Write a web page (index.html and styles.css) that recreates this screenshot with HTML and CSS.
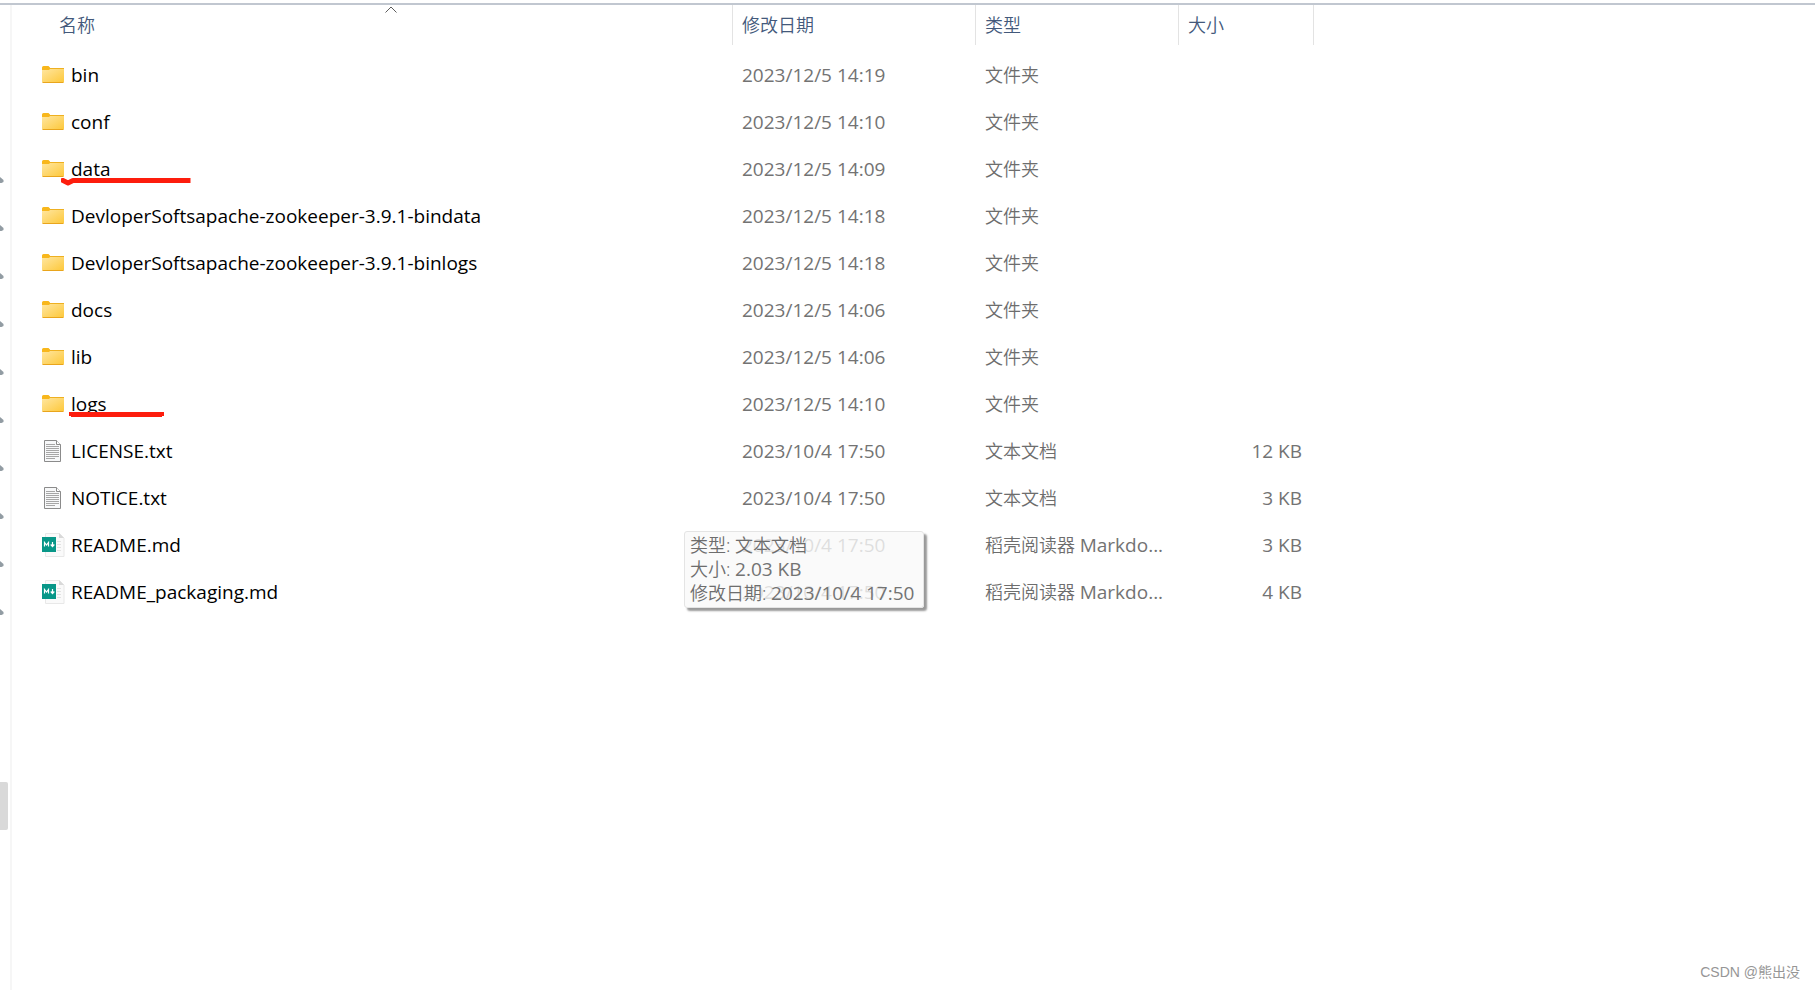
FILE: index.html
```
<!DOCTYPE html>
<html lang="zh-CN">
<head>
<meta charset="utf-8">
<title>apache-zookeeper-3.9.1-bin</title>
<link rel="stylesheet" href="styles.css">
</head>
<body>
<svg class="defs" aria-hidden="true">
  <defs>
    <linearGradient id="gold" x1="0" y1="0" x2="1" y2="1">
      <stop offset="0" stop-color="#ffe6a0"/><stop offset="1" stop-color="#fdc83a"/>
    </linearGradient>
    <symbol id="folder" viewBox="0 0 24 24">
      <path d="M1 4.500q0-1.500 1.500-1.500h5l1.500 1.500v1.500h14v3H1z" fill="#f8b71c"/>
      <path d="M1 7h7l1-1h14v12.500q0 1-1 1H2q-1 0-1-1z" fill="url(#gold)"/>
      <path d="M8.500 5.500H23" stroke="#eeb021"/>
      <path d="M1.500 19.500h21" stroke="#e9a51c"/>
    </symbol>
    <symbol id="text" viewBox="0 0 24 24">
      <path d="M3.500 1.500h12l4 4v17h-16z" fill="#f7f8f9" stroke="#8b8b8b"/>
      <path d="M15.500 1.500v4h4" fill="#fff" stroke="#8b8b8b"/>
      <path d="M5 5.500h9M5 7.500h13M5 9.500h13M5 11.500h13M5 13.500h13M5 15.500h13M5 17.500h13M5 19.500h9" stroke="#a6a6a6"/>
    </symbol>
    <symbol id="md" viewBox="0 0 24 24">
      <path d="M4.500.5h14l4.500 4.500v18.500h-18.500z" fill="#fafafa" stroke="#e8e8e8"/>
      <path d="M18 0v5h5z" fill="#d9d9d9"/>
      <path d="M16 8.500h4M16 11.500h4M16 14.500h4M16 17.500h4" stroke="#e2e2e2"/>
      <path d="M1 4h14v15H1z" fill="#089788"/>
      <path d="M3.500 13.500V9.500l2 2.500 2-2.500v4M11.500 9v4M9.700 11.500l1.800 2 1.800-2" fill="none" stroke="#fff" stroke-width="1.200"/>
    </symbol>
    <symbol id="pin" viewBox="0 0 4 8">
      <path d="M0 1l3.500 3v2L1.500 7H0z" fill="#929ca3"/>
    </symbol>
  </defs>
</svg>
<div class="window">
  <aside class="nav">
    <ul class="pins">
      <li><svg><use href="#pin"/></svg></li><li><svg><use href="#pin"/></svg></li>
      <li><svg><use href="#pin"/></svg></li><li><svg><use href="#pin"/></svg></li>
      <li><svg><use href="#pin"/></svg></li><li><svg><use href="#pin"/></svg></li>
      <li><svg><use href="#pin"/></svg></li><li><svg><use href="#pin"/></svg></li>
      <li><svg><use href="#pin"/></svg></li><li><svg><use href="#pin"/></svg></li>
    </ul>
    <div class="selected"></div>
  </aside>
  <main class="content">
    <table class="files">
      <colgroup><col class="c-name"><col class="c-date"><col class="c-type"><col class="c-size"><col></colgroup>
      <thead>
        <tr>
          <th class="h-name"><button type="button">名称<svg class="caret" viewBox="0 0 12 7"><path d="M.5 6.500l5.500-5.500 5.500 5.500" fill="none" stroke="#5c5c5c"/></svg></button></th>
          <th><button type="button">修改日期</button></th>
          <th><button type="button">类型</button></th>
          <th><button type="button">大小</button></th>
          <th></th>
        </tr>
      </thead>
      <tbody>
        <tr><td><span class="name"><svg class="icon"><use href="#folder"/></svg>bin</span></td><td class="date">2023/12/5 14:19</td><td>文件夹</td><td></td><td></td></tr>
        <tr><td><span class="name"><svg class="icon"><use href="#folder"/></svg>conf</span></td><td class="date">2023/12/5 14:10</td><td>文件夹</td><td></td><td></td></tr>
        <tr><td><span class="name"><svg class="icon"><use href="#folder"/></svg>data<svg class="mark mark-data" viewBox="0 0 130 8"><path d="M2 2.500l5 2.500 5-2.500H127" fill="none" stroke="#fd1d0d" stroke-width="5" stroke-linecap="square" stroke-linejoin="round"/></svg></span></td><td class="date">2023/12/5 14:09</td><td>文件夹</td><td></td><td></td></tr>
        <tr><td><span class="name"><svg class="icon"><use href="#folder"/></svg>DevloperSoftsapache-zookeeper-3.9.1-bindata</span></td><td class="date">2023/12/5 14:18</td><td>文件夹</td><td></td><td></td></tr>
        <tr><td><span class="name"><svg class="icon"><use href="#folder"/></svg>DevloperSoftsapache-zookeeper-3.9.1-binlogs</span></td><td class="date">2023/12/5 14:18</td><td>文件夹</td><td></td><td></td></tr>
        <tr><td><span class="name"><svg class="icon"><use href="#folder"/></svg>docs</span></td><td class="date">2023/12/5 14:06</td><td>文件夹</td><td></td><td></td></tr>
        <tr><td><span class="name"><svg class="icon"><use href="#folder"/></svg>lib</span></td><td class="date">2023/12/5 14:06</td><td>文件夹</td><td></td><td></td></tr>
        <tr><td><span class="name"><svg class="icon"><use href="#folder"/></svg>logs<svg class="mark mark-logs" viewBox="0 0 95 5"><path d="M0 0h95v4h-2v1H2V4H0z" fill="#fd1d0d"/></svg></span></td><td class="date">2023/12/5 14:10</td><td>文件夹</td><td></td><td></td></tr>
        <tr><td><span class="name"><svg class="icon"><use href="#text"/></svg>LICENSE.txt</span></td><td class="date">2023/10/4 17:50</td><td>文本文档</td><td class="size">12 KB</td><td></td></tr>
        <tr><td><span class="name"><svg class="icon"><use href="#text"/></svg>NOTICE.txt</span></td><td class="date">2023/10/4 17:50</td><td>文本文档</td><td class="size">3 KB</td><td></td></tr>
        <tr><td><span class="name"><svg class="icon"><use href="#md"/></svg>README.md</span></td><td class="date">2023/10/4 17:50</td><td>稻壳阅读器 <span class="latin">Markdo...</span></td><td class="size">3 KB</td><td></td></tr>
        <tr><td><span class="name"><svg class="icon"><use href="#md"/></svg>README_packaging.md</span></td><td class="date">2023/10/4 17:50</td><td>稻壳阅读器 <span class="latin">Markdo...</span></td><td class="size">4 KB</td><td></td></tr>
      </tbody>
    </table>
    <div class="tip" role="tooltip">
      <div>类型: 文本文档</div>
      <div>大小: <span class="latin">2.03 KB</span></div>
      <div>修改日期: <span class="latin">2023/10/4 17:50</span></div>
    </div>
    <p class="credit">CSDN @熊出没</p>
  </main>
</div>
</body>
</html>
```
FILE: styles.css
```
* { box-sizing: border-box; }
body {
  margin: 0;
  background: #fff;
  color: #6d6d6d;
  font: 18px/24px "Noto Sans", "Noto Sans CJK SC", sans-serif;
  font-weight: 350;
}
.defs { position: absolute; width: 0; height: 0; }
.window {
  display: flex;
  min-height: 100vh;
  padding-top: 3px;
}
.window::before {
  content: "";
  position: absolute;
  top: 3px;
  left: 0;
  right: 0;
  height: 2px;
  background: #c1c7d0;
}
.nav {
  width: 12px;
  margin-top: 2px;
  padding-top: 171px;
  border-right: 2px solid #f6f6f6;
}
.pins { margin: 0; padding: 0; list-style: none; }
.pins li { height: 48px; }
.pins svg { display: block; width: 4px; height: 8px; }
.selected {
  width: 8px;
  height: 48px;
  margin-top: 126px;
  border-radius: 0 2px 2px 0;
  background: #d9d9d9;
}
.content { position: relative; flex: 1; padding-top: 2px; }
.files {
  width: 100%;
  table-layout: fixed;
  border-collapse: collapse;
}
.c-name { width: 721px; }
.c-date { width: 243px; }
.c-type { width: 203px; }
.c-size { width: 135px; }
.files th { height: 46px; padding: 0; font-weight: inherit; vertical-align: top; }
.files .h-name { padding-left: 38px; }
.files th button {
  position: relative;
  display: block;
  width: 100%;
  height: 40px;
  padding: 0 9px;
  border: 0;
  border-right: 1px solid #e3e3e3;
  background: none;
  color: #43597b;
  font: inherit;
  text-align: left;
}
.caret {
  position: absolute;
  top: 1px;
  left: 50%;
  width: 12px;
  height: 7px;
  margin-left: -6px;
}
.files td { height: 47px; padding: 0 9px; white-space: nowrap; }
.files td:first-child { padding-left: 29px; }
.name {
  position: relative;
  display: flex;
  align-items: center;
  gap: 6px;
  color: #000;
  font-family: "Open Sans", "Noto Sans CJK SC", sans-serif;
  font-size: 19px;
  font-weight: 400;
}
.icon { width: 24px; height: 24px; }
.files .date, .latin, .files .size {
  color: #737373;
  font-family: "Open Sans", "Noto Sans CJK SC", sans-serif;
  font-size: 19px;
  font-weight: 400;
}
.files .size { padding-right: 12px; text-align: right; }
.mark { position: absolute; }
.mark-data { top: 21px; left: 20px; width: 130px; height: 8px; }
.mark-logs { top: 20px; left: 28px; width: 95px; height: 5px; }
.tip {
  position: absolute;
  top: 528px;
  left: 672px;
  padding: 1px 9px 2px 5px;
  border: 1px solid #e4e4e4;
  border-radius: 3px;
  background: rgba(249, 249, 249, 0.8);
  box-shadow: 3px 3px 2px rgba(0, 0, 0, 0.4);
  white-space: nowrap;
}
.credit {
  position: absolute;
  right: 15px;
  bottom: 8px;
  margin: 0;
  color: #969696;
  font: 14px/20px "Liberation Sans", "Noto Sans CJK SC", sans-serif;
}
```
